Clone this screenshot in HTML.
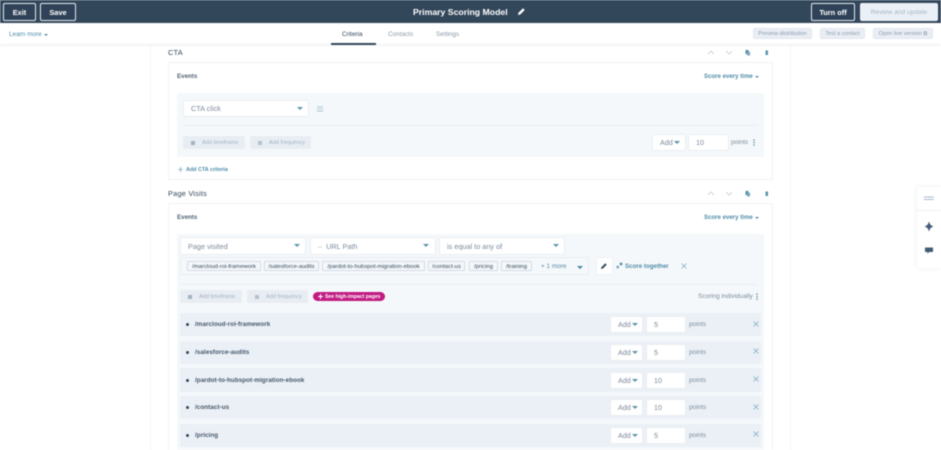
<!DOCTYPE html>
<html><head><meta charset="utf-8">
<style>
*{box-sizing:border-box}
html,body{margin:0;padding:0;width:941px;height:450px;overflow:hidden;background:#fff}
body{font-family:"Liberation Sans",sans-serif;color:#33475b;position:relative}
#w{position:absolute;left:0;top:0;width:941px;height:450px;overflow:hidden;filter:blur(.4px)}
#w div,#w svg{position:absolute}
.t{white-space:nowrap;line-height:12px;height:12px}
.hb{top:3px;height:18px;background:#2f4257;border:1px solid #e5ebf2;border-radius:2px;color:#fff;font-size:7.4px;font-weight:700;text-align:center;line-height:17px}
.gb{top:28px;height:11px;background:#e9eef4;border:1px solid #e3e9f0;border-radius:2px;color:#8a9bae;font-size:5.6px;text-align:center;line-height:11px;white-space:nowrap}
.tab{top:29px;font-size:6.4px;color:#8a99a8;white-space:nowrap;line-height:12px}
.box{background:#fff;border:1px solid #eef2f6;border-radius:1px}
.sel{background:#fff;border:1px solid #e9eef4;border-radius:2px;font-size:7.300px;color:#7c8b9b;line-height:16px;padding-left:7px;white-space:nowrap}
.car{width:0;height:0;border-left:3px solid transparent;border-right:3px solid transparent;border-top:3px solid #5b93ad}
.add{background:#fff;border:1px solid #e9eef4;border-radius:2px;font-size:7.2px;color:#7c8b9b;line-height:16px;padding-left:7px}
.dis{background:#e8edf3;border-radius:2px;font-size:5.6px;color:#a3b1c0;line-height:14px;white-space:nowrap}
.tag{top:261px;height:10px;background:#f5f8fa;border:1px solid #d3dce6;border-radius:1px;font-size:5.9px;color:#33475b;line-height:10px;text-align:center;white-space:nowrap}
.row{left:180px;width:581px;height:23px;background:#ebf0f6;border-radius:2px}
.b{font-size:6.300px;color:#33475b;font-weight:700;white-space:nowrap;line-height:12px;letter-spacing:.05px;opacity:.9}
.bul{left:186px;width:3px;height:3px;border-radius:50%;background:#33475b}
.pt{font-size:6.4px;color:#7c8b9b;white-space:nowrap;line-height:12px}
.h{font-size:7.4px;color:#33475b;white-space:nowrap;line-height:12px;letter-spacing:.2px}
.ev{font-size:6.2px;color:#33475b;font-weight:700;white-space:nowrap;line-height:12px;opacity:.85}
.lk{font-size:6.100px;color:#4f8ca8;font-weight:700;white-space:nowrap;line-height:12px}
</style></head><body><div id="w">

<!-- column -->
<div style="left:150px;top:44px;width:641px;height:406px;border-left:1px solid #f3f5f8;border-right:1px solid #f3f5f8"></div>

<!-- header -->
<div style="left:0;top:0;width:941px;height:23px;background:#33475b"></div>
<div class="hb" style="left:3px;width:33px">Exit</div>
<div class="hb" style="left:40px;width:36px">Save</div>
<div class="t" style="left:413px;top:6px;color:#fff;font-size:8.700px;font-weight:700">Primary Scoring Model</div>
<svg style="left:517px;top:7px" width="9" height="9" viewBox="0 0 9 9"><path d="M1 8l.5-2.200L6 1.300l1.700 1.700L3.200 7.500z" fill="#fff"/></svg>
<div class="hb" style="left:811px;width:44px">Turn off</div>
<div class="hb" style="left:860px;width:78px;background:#eaf0f6;border-color:#eaf0f6;color:#a9b7c5;font-weight:400;font-size:6.600px;line-height:18px">Review and update</div>

<!-- subnav -->
<div style="left:0;top:23px;width:941px;height:21px;background:#fff;box-shadow:0 1px 2px rgba(45,62,80,.1)"></div>
<div class="t" style="left:9px;top:29px;font-size:6.400px;color:#4f8ca8">Learn more</div>
<div class="car" style="left:44px;top:33.500px;border-width:2px 2px 0;border-top-color:#4f8ca8"></div>
<div class="tab" style="left:342px;color:#33475b">Criteria</div>
<div style="left:331px;top:43px;width:45px;height:2px;background:#33475b"></div>
<div class="tab" style="left:388px">Contacts</div>
<div class="tab" style="left:436px">Settings</div>
<div class="gb" style="left:753px;width:59px">Preview distribution</div>
<div class="gb" style="left:820px;width:45px">Test a contact</div>
<div class="gb" style="left:873px;width:60px">Open live version ⧉</div>

<!-- CTA -->
<div class="h" style="left:168px;top:47px">CTA</div>
<svg style="left:706px;top:49px" width="66" height="7" viewBox="0 0 66 7"><path d="M2 5l3-3 3 3M20 2l3 3 3-3" fill="none" stroke="#b4c3d0" stroke-width=".7"/><rect x="39.500" y="1" width="3" height="4" fill="#4f8ca8"/><rect x="41" y="2.500" width="3" height="4" fill="#7ba7bd"/><rect x="59.500" y="1.500" width="2.500" height="4.500" fill="#5a93ad"/></svg>
<div class="box" style="left:168px;top:62px;width:605px;height:118px"></div>
<div class="ev" style="left:177px;top:71px">Events</div>
<div class="lk" style="left:704px;top:71px">Score every time</div>
<div class="car" style="left:755px;top:76px;border-width:2px 2px 0;border-top-color:#4f8ca8"></div>
<div style="left:177px;top:93px;width:587px;height:64px;background:#f5f8fa"></div>
<div class="sel" style="left:183px;top:100px;width:126px;height:17px">CTA click</div>
<div class="car" style="left:297px;top:107px"></div>
<svg style="left:316.500px;top:105.500px" width="6" height="6" viewBox="0 0 6 6"><path d="M0 .8h6M0 3h6M0 5.200h6" stroke="#7ba7bd" stroke-width=".6" fill="none"/></svg>
<div style="left:183px;top:125px;width:575px;height:1px;background:#e9eef3"></div>
<div class="dis" style="left:183px;top:136px;width:62px;height:13px;padding-left:19px">Add timeframe</div>
<div class="dis" style="left:250px;top:136px;width:61px;height:13px;padding-left:19px">Add frequency</div>
<div style="left:191px;top:140.500px;width:4px;height:4px;background:#a3b1c0"></div>
<div style="left:258px;top:140.500px;width:4px;height:4px;background:#b5c1cd"></div>
<div class="add" style="left:652px;top:134px;width:34px;height:17px">Add</div>
<div class="car" style="left:674px;top:141px"></div>
<div class="add" style="left:688px;top:134px;width:41px;height:17px">10</div>
<div class="pt" style="left:731px;top:137px">points</div>
<svg style="left:752px;top:139px" width="4" height="8" viewBox="0 0 4 8"><circle cx="2" cy="1" r=".8" fill="#4f8ca8"/><circle cx="2" cy="3.500" r=".8" fill="#4f8ca8"/><circle cx="2" cy="6" r=".8" fill="#4f8ca8"/></svg>
<svg style="left:178px;top:167px" width="5" height="5" viewBox="0 0 5 5"><path d="M2.500 0v5M0 2.500h5" stroke="#4f8ca8" stroke-width=".6"/></svg>
<div class="lk" style="left:186px;top:163.500px;font-size:5.400px">Add CTA criteria</div>

<!-- Page visits -->
<div class="h" style="left:168px;top:188px">Page Visits</div>
<svg style="left:706px;top:190px" width="66" height="7" viewBox="0 0 66 7"><path d="M2 5l3-3 3 3M20 2l3 3 3-3" fill="none" stroke="#b4c3d0" stroke-width=".7"/><rect x="39.500" y="1" width="3" height="4" fill="#4f8ca8"/><rect x="41" y="2.500" width="3" height="4" fill="#7ba7bd"/><rect x="59.500" y="1.500" width="2.500" height="4.500" fill="#5a93ad"/></svg>
<div class="box" style="left:168px;top:203px;width:605px;height:260px"></div>
<div class="ev" style="left:177px;top:212px">Events</div>
<div class="lk" style="left:704px;top:212px">Score every time</div>
<div class="car" style="left:755px;top:217px;border-width:2px 2px 0;border-top-color:#4f8ca8"></div>
<div style="left:177px;top:234px;width:587px;height:230px;background:#f5f8fa"></div>
<div class="sel" style="left:180px;top:237px;width:126px;height:18px;line-height:17px">Page visited</div>
<div class="car" style="left:294px;top:244px"></div>
<div class="sel" style="left:310px;top:237px;width:126px;height:18px;line-height:17px"><span style="color:#a3b1c0">–</span>&nbsp;&nbsp;URL Path</div>
<div class="car" style="left:423px;top:244px"></div>
<div class="sel" style="left:439px;top:237px;width:126px;height:18px;line-height:17px">is equal to any of</div>
<div class="car" style="left:553px;top:244px"></div>
<div class="box" style="left:180px;top:257px;width:409px;height:18px;background:#f5f8fa;border-color:#e9eef4"></div>
<div class="tag" style="left:187px;width:74px">/marcloud-roi-framework</div>
<div class="tag" style="left:264px;width:55px">/salesforce-audits</div>
<div class="tag" style="left:322px;width:103px">/pardot-to-hubspot-migration-ebook</div>
<div class="tag" style="left:428px;width:37px">/contact-us</div>
<div class="tag" style="left:469px;width:29px">/pricing</div>
<div class="tag" style="left:501px;width:31px">/training</div>
<div class="lk" style="left:541px;top:261px;font-size:6.400px;font-weight:400">+ 1 more</div>
<div class="car" style="left:577px;top:265.500px;border-top-color:#3f85a5"></div>
<div class="box" style="left:596px;top:257px;width:17px;height:18px"></div>
<svg style="left:600px;top:262px" width="8" height="8" viewBox="0 0 8 8"><path d="M1 7l.4-1.800L5.300 1.300l1.400 1.400L2.800 6.600z" fill="#33475b"/></svg>
<svg style="left:616px;top:262px" width="7" height="7" viewBox="0 0 7 7"><rect x="0.500" y="3.800" width="2.500" height="2.500" fill="#7ba7bd"/><rect x="3.800" y="0.700" width="2.500" height="2.500" fill="#4f8ca8"/></svg>
<div class="lk" style="left:625px;top:261px;font-size:6.200px">Score together</div>
<svg style="left:681px;top:263px" width="6" height="6" viewBox="0 0 6 6"><path d="M.5.500l5 5M5.500.500l-5 5" stroke="#6ea3bb" stroke-width=".6"/></svg>
<div style="left:180px;top:284px;width:578px;height:1px;background:#e9eef3"></div>
<div class="dis" style="left:180px;top:290px;width:62px;height:13px;padding-left:19px">Add timeframe</div>
<div class="dis" style="left:247px;top:290px;width:61px;height:13px;padding-left:19px">Add frequency</div>
<div style="left:188px;top:294.500px;width:4px;height:4px;background:#a3b1c0"></div>
<div style="left:255px;top:294.500px;width:4px;height:4px;background:#b5c1cd"></div>
<div style="left:313px;top:292px;width:72px;height:9px;background:#c21a82;border-radius:5px;color:#fff;font-size:5.100px;font-weight:700;line-height:10px;padding-left:12px;white-space:nowrap">See high-impact pages</div>
<svg style="left:318px;top:294px" width="5" height="5" viewBox="0 0 5 5"><path d="M2.500 0v5M0 2.500h5" stroke="#fff" stroke-width="1"/></svg>
<div class="pt" style="left:698px;top:290.500px">Scoring individually</div>
<svg style="left:755px;top:293px" width="4" height="8" viewBox="0 0 4 8"><circle cx="2" cy="1" r=".8" fill="#4f8ca8"/><circle cx="2" cy="3.500" r=".8" fill="#4f8ca8"/><circle cx="2" cy="6" r=".8" fill="#4f8ca8"/></svg>

<!-- rows -->
<div class="row" style="top:313px"></div>
<div class="bul" style="top:323px"></div><div class="b" style="left:195px;top:319px">/marcloud-roi-framework</div>
<div class="add" style="left:610px;top:316px;width:33px;height:17px">Add</div><div class="car" style="left:632px;top:323px"></div>
<div class="add" style="left:646px;top:316px;width:40px;height:17px">5</div><div class="pt" style="left:689px;top:319px">points</div>
<svg style="left:753px;top:321px" width="6" height="6" viewBox="0 0 6 6"><path d="M.5.500l5 5M5.500.500l-5 5" stroke="#6ea3bb" stroke-width=".6"/></svg>

<div class="row" style="top:341px"></div>
<div class="bul" style="top:351px"></div><div class="b" style="left:195px;top:347px">/salesforce-audits</div>
<div class="add" style="left:610px;top:344px;width:33px;height:17px">Add</div><div class="car" style="left:632px;top:351px"></div>
<div class="add" style="left:646px;top:344px;width:40px;height:17px">5</div><div class="pt" style="left:689px;top:347px">points</div>
<svg style="left:753px;top:348px" width="6" height="6" viewBox="0 0 6 6"><path d="M.5.500l5 5M5.500.500l-5 5" stroke="#6ea3bb" stroke-width=".6"/></svg>

<div class="row" style="top:368px;height:24px"></div>
<div class="bul" style="top:379px"></div><div class="b" style="left:195px;top:375px">/pardot-to-hubspot-migration-ebook</div>
<div class="add" style="left:610px;top:372px;width:33px;height:17px">Add</div><div class="car" style="left:632px;top:379px"></div>
<div class="add" style="left:646px;top:372px;width:40px;height:17px">10</div><div class="pt" style="left:689px;top:375px">points</div>
<svg style="left:753px;top:376px" width="6" height="6" viewBox="0 0 6 6"><path d="M.5.500l5 5M5.500.500l-5 5" stroke="#6ea3bb" stroke-width=".6"/></svg>

<div class="row" style="top:396px"></div>
<div class="bul" style="top:406px"></div><div class="b" style="left:195px;top:402px">/contact-us</div>
<div class="add" style="left:610px;top:399px;width:33px;height:17px">Add</div><div class="car" style="left:632px;top:406px"></div>
<div class="add" style="left:646px;top:399px;width:40px;height:17px">10</div><div class="pt" style="left:689px;top:402px">points</div>
<svg style="left:753px;top:404px" width="6" height="6" viewBox="0 0 6 6"><path d="M.5.500l5 5M5.500.500l-5 5" stroke="#6ea3bb" stroke-width=".6"/></svg>

<div class="row" style="top:424px"></div>
<div class="bul" style="top:434px"></div><div class="b" style="left:195px;top:430px">/pricing</div>
<div class="add" style="left:610px;top:427px;width:33px;height:17px">Add</div><div class="car" style="left:632px;top:434px"></div>
<div class="add" style="left:646px;top:427px;width:40px;height:17px">5</div><div class="pt" style="left:689px;top:430px">points</div>
<svg style="left:753px;top:431px" width="6" height="6" viewBox="0 0 6 6"><path d="M.5.500l5 5M5.500.500l-5 5" stroke="#6ea3bb" stroke-width=".6"/></svg>

<!-- side widget -->
<div style="left:917px;top:187px;width:24px;height:81px;background:#fff;border-radius:2px 0 0 2px;box-shadow:0 0 4px rgba(45,62,80,.1)"></div>
<div style="left:917px;top:210px;width:24px;height:1px;background:#eef2f6"></div>
<svg style="left:924px;top:196px" width="10" height="5" viewBox="0 0 10 5"><path d="M0 1h10M0 3.500h10" stroke="#8fa3b8" stroke-width="1" stroke-dasharray="1.500 .5"/></svg>
<svg style="left:925px;top:222px" width="8" height="9" viewBox="0 0 8 9"><path d="M4 0C4.300 2 5 3.700 8 4.500 5 5.300 4.300 7 4 9 3.700 7 3 5.300 0 4.500 3 3.700 3.700 2 4 0z" fill="#425b76" stroke="#425b76" stroke-width=".6"/></svg>
<svg style="left:925px;top:247px" width="8" height="8" viewBox="0 0 8 8"><path d="M0 .5h8v4.500H4L2.500 7V5H0z" fill="#425b76"/></svg>
</div></body></html>
